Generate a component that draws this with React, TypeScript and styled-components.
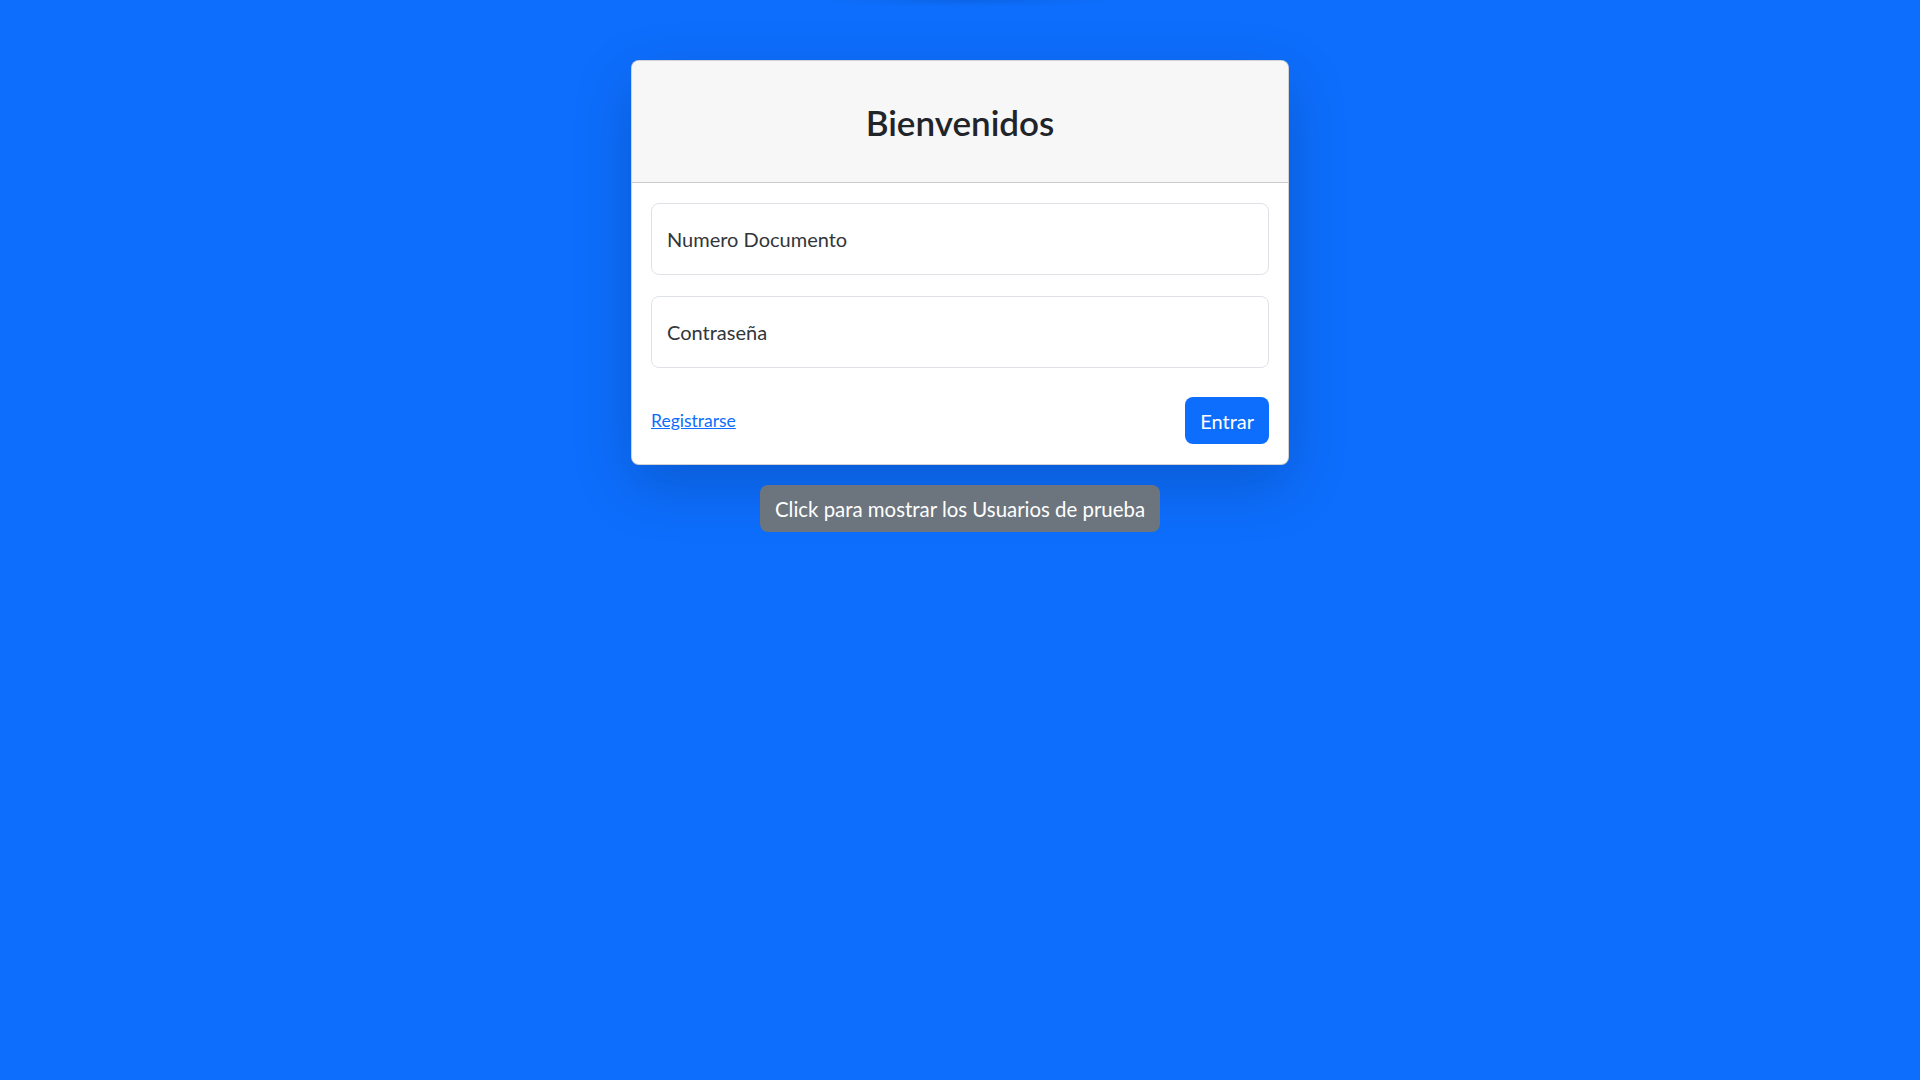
import React from "react";
import styled, { createGlobalStyle } from "styled-components";

const GlobalStyle = createGlobalStyle`
  html, body {
    margin: 0;
    padding: 0;
  }
  body {
    min-height: 100vh;
    background-color: #0d6efd;
    background-image: radial-gradient(ellipse 150px 7px at 967px 0px, rgba(0, 0, 0, 0.09), rgba(0, 0, 0, 0));
    background-repeat: no-repeat;
    font-family: "Lato", "Segoe UI", "Noto Sans", sans-serif;
    color: #212529;
  }
  * { box-sizing: border-box; }
`;

const Page = styled.main`
  display: flex;
  flex-direction: column;
  align-items: center;
  padding-top: 60px;
  min-height: 100vh;
`;

const Card = styled.section`
  width: 658px;
  background: #ffffff;
  border: 1px solid rgba(0, 0, 0, 0.175);
  border-radius: 8px;
  box-shadow: 0 20px 60px rgba(0, 0, 0, 0.175);
  overflow: hidden;
`;

const CardHeader = styled.header`
  height: 122px;
  display: flex;
  align-items: center;
  justify-content: center;
  background: #f7f7f7;
  border-bottom: 1px solid rgba(0, 0, 0, 0.175);
`;

const Title = styled.h3`
  margin: 0;
  font-size: 35px;
  font-weight: 600;
  line-height: 1.2;
  color: #212529;
`;

const CardBody = styled.div`
  padding: 20px 19px 20px;
  display: flex;
  flex-direction: column;
  gap: 21px;
`;

const Field = styled.input`
  display: block;
  width: 100%;
  height: 72px;
  padding: 0 15px;
  border: 1px solid #dee2e6;
  border-radius: 8px;
  font-family: inherit;
  font-size: 20px;
  color: #212529;
  background: #fff;
  outline: none;
  &::placeholder {
    color: #212529;
    opacity: 0.92;
  }
`;

const Footer = styled.div`
  margin-top: 8px;
  display: flex;
  align-items: center;
  justify-content: space-between;
`;

const RegisterLink = styled.a`
  font-size: 17.5px;
  color: #0d6efd;
  text-decoration: underline;
  cursor: pointer;
`;

const Button = styled.button<{ $variant: "primary" | "secondary" }>`
  height: 47px;
  padding: 0 15px;
  border: none;
  border-radius: 8px;
  font-family: inherit;
  font-size: 20px;
  font-weight: 400;
  color: #ffffff;
  background: ${(p) => (p.$variant === "primary" ? "#0d6efd" : "#6c757d")};
  cursor: pointer;
`;

const HintButton = styled(Button)`
  margin-top: 20px;
  font-size: 20.4px;
`;

export default function App() {
  return (
    <>
      <GlobalStyle />
      <Page>
        <Card>
          <CardHeader>
            <Title>Bienvenidos</Title>
          </CardHeader>
          <CardBody>
            <Field type="text" placeholder="Numero Documento" />
            <Field type="password" placeholder="Contraseña" />
            <Footer>
              <RegisterLink href="#">Registrarse</RegisterLink>
              <Button $variant="primary">Entrar</Button>
            </Footer>
          </CardBody>
        </Card>
        <HintButton $variant="secondary">Click para mostrar los Usuarios de prueba</HintButton>
      </Page>
    </>
  );
}
